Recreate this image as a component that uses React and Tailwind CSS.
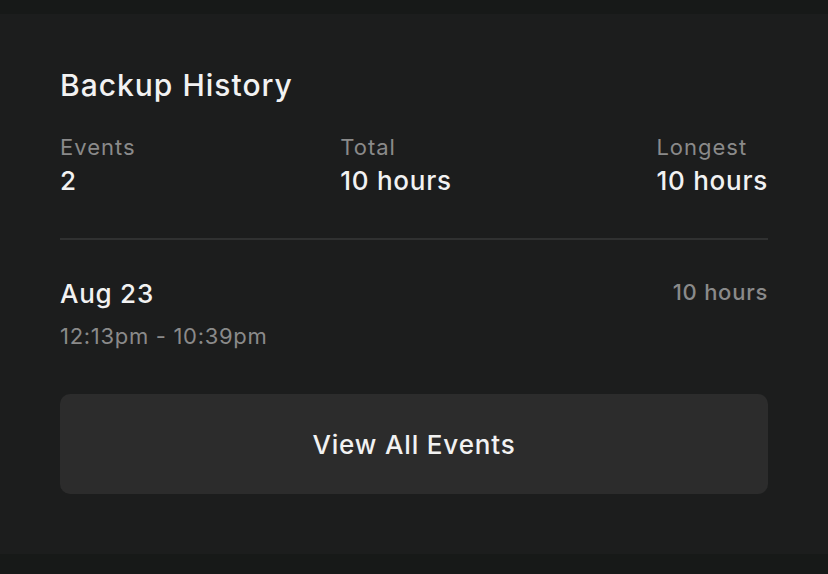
export default function App() {
  const stats = [
    { label: 'Events', value: '2' },
    { label: 'Total', value: '10 hours' },
    { label: 'Longest', value: '10 hours' },
  ];

  return (
    <div
      className="min-h-screen bg-[#171918] pt-[14px] pb-[20px]"
      style={{ fontFamily: 'Inter, "Noto Sans", sans-serif' }}
    >
      <div className="bg-[#1c1d1d] px-[60px] pt-[53px] pb-[60px]">
        <h2 className="text-[30px] leading-[36px] font-medium tracking-[1px] text-[#f2f2f2]">
          Backup History
        </h2>

        <div className="mt-[30px] flex justify-between">
          {stats.map((s) => (
            <div key={s.label} className="flex flex-col gap-[4px]">
              <span className="text-[22px] leading-[28px] tracking-[1px] text-[#8a8a8a]">
                {s.label}
              </span>
              <span className="text-[26px] leading-[32px] font-medium tracking-[0.75px] text-[#f2f2f2]">
                {s.value}
              </span>
            </div>
          ))}
        </div>

        <div className="mt-[41px] h-[2px] bg-[#303131]" />

        <div className="mt-[38px] flex items-start justify-between">
          <div className="flex flex-col gap-[12px]">
            <span className="text-[26px] leading-[32px] font-medium tracking-[0.75px] text-[#f2f2f2]">
              Aug 23
            </span>
            <span className="text-[22px] leading-[28px] tracking-[0.7px] text-[#8a8a8a]">
              12:13pm - 10:39pm
            </span>
          </div>
          <span className="text-[22px] leading-[28px] font-medium tracking-[0.75px] text-[#8a8a8a]">
            10 hours
          </span>
        </div>

        <button className="mt-[44px] flex h-[100px] w-full items-center justify-center rounded-[10px] bg-[#2c2c2c] text-[26px] font-medium tracking-[0.85px] text-[#f2f2f2]">
          View All Events
        </button>
      </div>
    </div>
  );
}
